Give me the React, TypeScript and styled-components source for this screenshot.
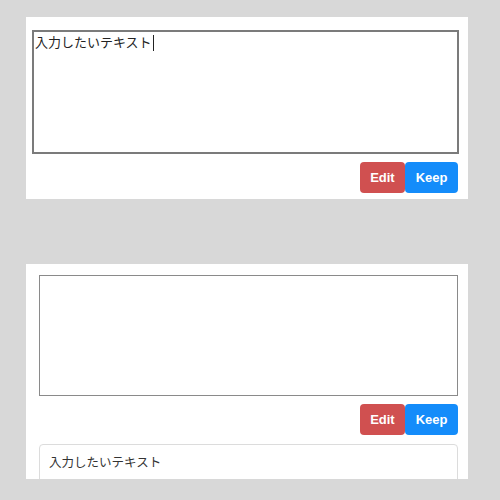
import React from "react";
import styled, { createGlobalStyle } from "styled-components";

const Global = createGlobalStyle`
  html, body {
    margin: 0;
    padding: 0;
    background: #d8d8d8;
  }
  body {
    font-family: "Liberation Sans", "Noto Sans CJK JP", sans-serif;
  }
`;

const Page = styled.div`
  width: 500px;
  height: 500px;
  padding: 17px 0 0 26px;
  box-sizing: border-box;
  display: flex;
  flex-direction: column;
  gap: 65px;
  overflow: hidden;
`;

const Panel = styled.section<{ $pad: number; $padTop: number; $height: number }>`
  width: 442px;
  height: ${(p) => p.$height}px;
  flex-shrink: 0;
  box-sizing: border-box;
  background: #ffffff;
  padding: ${(p) => p.$padTop}px 0 0 ${(p) => p.$pad}px;
  display: flex;
  flex-direction: column;
  overflow: hidden;
`;

const Editor = styled.div<{ $width: number; $height: number; $thick?: boolean }>`
  width: ${(p) => p.$width}px;
  height: ${(p) => p.$height}px;
  flex-shrink: 0;
  box-sizing: border-box;
  border: ${(p) => (p.$thick ? "2px solid #7b7b7b" : "1px solid #8a8a8a")};
  padding: 3px 1px;
  font-family: "Liberation Sans", "Noto Sans CJK JP", sans-serif;
  font-size: 13px;
  line-height: 15px;
  color: #222;
  background: #fff;
`;

const Caret = styled.span`
  display: inline-block;
  width: 1px;
  height: 16px;
  background: #222;
  vertical-align: top;
  margin-left: 1px;
`;

const ButtonRow = styled.div<{ $width: number }>`
  width: ${(p) => p.$width}px;
  flex-shrink: 0;
  display: flex;
  justify-content: flex-end;
  margin-top: 8px;
`;

const Button = styled.button<{ $variant: "danger" | "primary" }>`
  height: 31px;
  padding: 0 10.5px;
  border: none;
  border-radius: 4px;
  font-family: "Liberation Sans", Arial, sans-serif;
  font-size: 13px;
  font-weight: bold;
  color: #fff;
  background: ${(p) => (p.$variant === "danger" ? "#d05050" : "#148cfa")};
  cursor: pointer;
`;

const Output = styled.div`
  width: 419px;
  flex-shrink: 0;
  margin-top: 9px;
  box-sizing: border-box;
  border: 1px solid #dcdcdc;
  border-radius: 4px;
  padding: 10px 9px 14px;
  font-family: "Liberation Sans", "Noto Sans CJK JP", sans-serif;
  font-size: 12.5px;
  line-height: 16px;
  color: #333;
`;

export default function App() {
  const text = "入力したいテキスト";
  return (
    <>
      <Global />
      <Page>
        <Panel $pad={6} $padTop={13} $height={182}>
          <Editor $width={427} $height={124} $thick>
            {text}
            <Caret />
          </Editor>
          <ButtonRow $width={426}>
            <Button $variant="danger">Edit</Button>
            <Button $variant="primary">Keep</Button>
          </ButtonRow>
        </Panel>
        <Panel $pad={13} $padTop={11} $height={215}>
          <Editor $width={419} $height={121} />
          <ButtonRow $width={419}>
            <Button $variant="danger">Edit</Button>
            <Button $variant="primary">Keep</Button>
          </ButtonRow>
          <Output>{text}</Output>
        </Panel>
      </Page>
    </>
  );
}
